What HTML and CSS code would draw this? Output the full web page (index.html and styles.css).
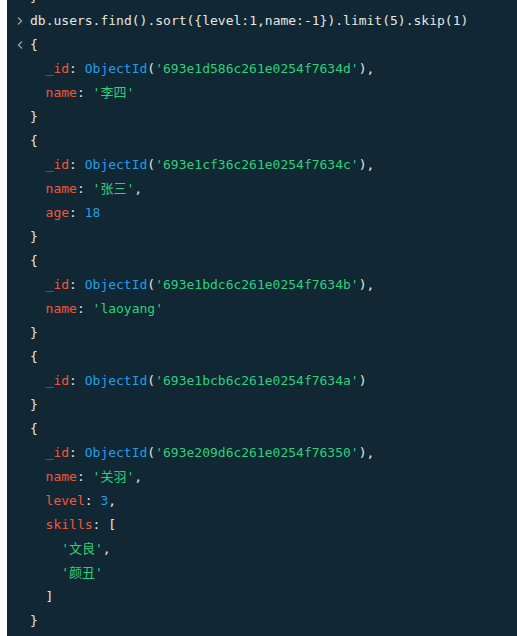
FILE: index.html
```html
<!DOCTYPE html>
<html>
<head>
<meta charset="utf-8">
<link rel="stylesheet" href="styles.css">
</head>
<body>
<div class="shell">
  <div class="line cut"><span class="p">}</span></div>
  <div class="line"><svg class="chev" width="6" height="10" viewBox="0 0 6 10"><path d="M1 1.5 L4.5 5 L1 8.5" fill="none" stroke="#8b979c" stroke-width="1.5"/></svg><span class="t">db.users.find().sort({level:1,name:-1}).limit(5).skip(1)</span></div>
  <div class="line"><svg class="chev" width="6" height="10" viewBox="0 0 6 10"><path d="M5 1.5 L1.5 5 L5 8.5" fill="none" stroke="#8b979c" stroke-width="1.5"/></svg><span class="p">{</span></div>
  <div class="line i1"><span class="k">_id</span><span class="p">: </span><span class="b">ObjectId</span><span class="p">(</span><span class="s">'693e1d586c261e0254f7634d'</span><span class="p">),</span></div>
  <div class="line i1"><span class="k">name</span><span class="p">: </span><span class="s">'李四'</span></div>
  <div class="line"><span class="p">}</span></div>
  <div class="line"><span class="p">{</span></div>
  <div class="line i1"><span class="k">_id</span><span class="p">: </span><span class="b">ObjectId</span><span class="p">(</span><span class="s">'693e1cf36c261e0254f7634c'</span><span class="p">),</span></div>
  <div class="line i1"><span class="k">name</span><span class="p">: </span><span class="s">'张三'</span><span class="p">,</span></div>
  <div class="line i1"><span class="k">age</span><span class="p">: </span><span class="b">18</span></div>
  <div class="line"><span class="p">}</span></div>
  <div class="line"><span class="p">{</span></div>
  <div class="line i1"><span class="k">_id</span><span class="p">: </span><span class="b">ObjectId</span><span class="p">(</span><span class="s">'693e1bdc6c261e0254f7634b'</span><span class="p">),</span></div>
  <div class="line i1"><span class="k">name</span><span class="p">: </span><span class="s">'laoyang'</span></div>
  <div class="line"><span class="p">}</span></div>
  <div class="line"><span class="p">{</span></div>
  <div class="line i1"><span class="k">_id</span><span class="p">: </span><span class="b">ObjectId</span><span class="p">(</span><span class="s">'693e1bcb6c261e0254f7634a'</span><span class="p">)</span></div>
  <div class="line"><span class="p">}</span></div>
  <div class="line"><span class="p">{</span></div>
  <div class="line i1"><span class="k">_id</span><span class="p">: </span><span class="b">ObjectId</span><span class="p">(</span><span class="s">'693e209d6c261e0254f76350'</span><span class="p">),</span></div>
  <div class="line i1"><span class="k">name</span><span class="p">: </span><span class="s">'关羽'</span><span class="p">,</span></div>
  <div class="line i1"><span class="k">level</span><span class="p">: </span><span class="b">3</span><span class="p">,</span></div>
  <div class="line i1"><span class="k">skills</span><span class="p">: [</span></div>
  <div class="line i2"><span class="s">'文良'</span><span class="p">,</span></div>
  <div class="line i2"><span class="s">'颜丑'</span></div>
  <div class="line i1"><span class="p">]</span></div>
  <div class="line"><span class="p">}</span></div>
</div>
</body>
</html>
```
FILE: styles.css
```css
html, body {
  margin: 0;
  padding: 0;
  background: #ffffff;
  height: 100%;
  overflow: hidden;
}
.shell {
  margin-left: 7px;
  height: 100%;
  background: #112733;
  font-family: "DejaVu Sans Mono", "Noto Sans CJK SC", monospace;
  font-size: 13px;
  color: #e3e8e6;
  overflow: hidden;
}
.line {
  height: 24px;
  line-height: 24px;
  padding-left: 23px;
  position: relative;
  white-space: pre;
}
.cut {
  margin-top: -15px;
}
.chev {
  position: absolute;
  left: 10px;
  top: 7px;
}
.i1 { padding-left: 38.6px; }
.i2 { padding-left: 54.2px; }
.p { color: #e3e8e6; }
.k { color: #f0583f; }
.b { color: #1f9ee8; }
.s { color: #2ad17a; }
.s, .k, .b { font-weight: normal; }
```
